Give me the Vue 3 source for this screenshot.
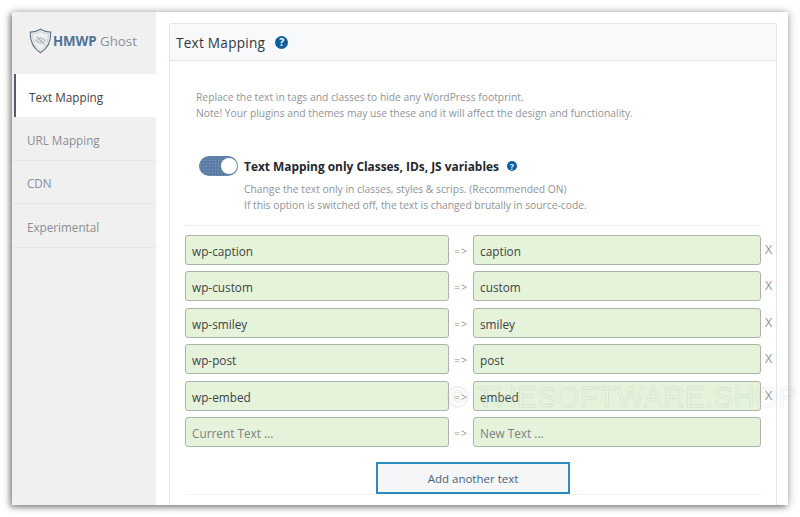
<script setup>
const nav = [
  { label: 'Text Mapping', active: true },
  { label: 'URL Mapping' },
  { label: 'CDN' },
  { label: 'Experimental' }
]
const rows = [
  ['wp-caption', 'caption'],
  ['wp-custom', 'custom'],
  ['wp-smiley', 'smiley'],
  ['wp-post', 'post'],
  ['wp-embed', 'embed']
]
</script>

<template>
  <div class="page">
    <div class="window">
      <aside class="sidebar">
        <div class="brand">
          <svg class="shield" width="23" height="26" viewBox="0 0 23 26" fill="none">
            <path d="M11.5 1.2C8 3.2 4.8 4 1.3 4.1c-.3 8.6 2 15.800 10.200 20.700C19.700 19.900 22 12.700 21.700 4.100 18.200 4 15 3.200 11.500 1.200Z" stroke="#5d7186" stroke-width="1.100"/>
            <path d="M11.500 3.400C9 4.800 6.500 5.500 3.600 5.800c0 6.800 2 12.700 7.900 16.500 5.900-3.800 7.900-9.700 7.900-16.500-2.900-.3-5.400-1-7.900-2.400Z" stroke="#c3c8cd" stroke-width=".8"/>
            <path d="M6 12.500c3.300-3.600 7.700-3.600 11 0-3.300 3.600-7.700 3.600-11 0Z" fill="#d6d8da" stroke="#aeb3b8" stroke-width=".7"/>
            <path d="M7.500 8l8 9" stroke="#a5abb1" stroke-width="1"/>
          </svg>
          <span class="brand-text"><b>HMWP</b> <span>Ghost</span></span>
        </div>
        <nav class="nav">
          <a v-for="item in nav" :key="item.label" class="nav-item" :class="{ active: item.active }">{{ item.label }}</a>
        </nav>
      </aside>

      <main class="content">
        <section class="panel">
          <header class="panel-head">
            <h1>Text Mapping</h1>
            <span class="help big">?</span>
          </header>
          <div class="panel-body">
            <div class="intro">
              <p>Replace the text in tags and classes to hide any WordPress footprint.</p>
              <p>Note! Your plugins and themes may use these and it will affect the design and functionality.</p>
            </div>

            <div class="option">
              <span class="toggle"><span class="knob"></span></span>
              <div class="option-text">
                <div class="option-title">
                  <strong>Text Mapping only Classes, IDs, JS variables</strong>
                  <span class="help small">?</span>
                </div>
                <p>Change the text only in classes, styles &amp; scrips. (Recommended ON)</p>
                <p>If this option is switched off, the text is changed brutally in source-code.</p>
              </div>
            </div>

            <div class="rows">
              <div v-for="r in rows" :key="r[0]" class="row">
                <input class="field left" :value="r[0]" readonly />
                <span class="arrow">=&gt;</span>
                <input class="field right" :value="r[1]" readonly />
                <span class="remove">X</span>
              </div>
              <div class="row">
                <input class="field left" placeholder="Current Text ..." />
                <span class="arrow">=&gt;</span>
                <input class="field right" placeholder="New Text ..." />
              </div>
            </div>

            <div class="actions">
              <button class="add" type="button">Add another text</button>
            </div>
          </div>
        </section>
      </main>
      <div class="watermark">© THESOFTWARE.SHOP</div>
    </div>
  </div>
</template>

<style>
html, body { margin: 0; background: #fff; overflow: hidden; }
</style>

<style scoped>
.page {
  width: 800px;
  height: 517px;
  box-sizing: border-box;
  padding: 12px;
  font-family: "Open Sans", "Noto Sans", sans-serif;
  overflow: hidden;
}
.window {
  position: relative;
  width: 776px;
  height: 493px;
  display: flex;
  background: #fff;
  box-shadow: -2px 2px 6px rgba(0, 0, 0, .45), 1px 0 9px rgba(0, 0, 0, .22);
}
.sidebar {
  width: 144px;
  flex: none;
  background: #f0f0f0;
}
.brand {
  height: 62px;
  box-sizing: border-box;
  padding: 16px 0 0 17px;
  display: flex;
  align-items: flex-start;
  gap: 1px;
}
.shield { flex: none; }
.brand-text {
  padding-top: 1px;
  font-size: 13.300px;
  line-height: 25px;
  color: #8c9196;
  white-space: nowrap;
}
.brand-text b { color: #4f7398; font-weight: 700; letter-spacing: -.1px; }
.nav { display: flex; flex-direction: column; }
.nav-item {
  height: 43.400px;
  box-sizing: border-box;
  padding: 3px 0 0 15px;
  display: flex;
  align-items: center;
  font-size: 11.700px;
  color: #8a8f94;
  border-bottom: 1px solid #e6e6e6;
}
.nav-item.active {
  margin-left: 2px;
  background: #fff;
  color: #3f4347;
  border-bottom: 0;
  border-left: 2px solid #4b5e78;
  padding-left: 13px;
}
.content {
  flex: 1;
  min-width: 0;
  padding: 11px 11px 0 13px;
  overflow: hidden;
}
.panel {
  height: 482px;
  box-sizing: border-box;
  border: 1px solid #e3e5e7;
  border-bottom: 0;
  border-radius: 2px 2px 0 0;
}
.panel-head {
  height: 37px;
  box-sizing: border-box;
  background: #f7f9fa;
  border-bottom: 1px solid #e3e5e7;
  padding-left: 6px;
  display: flex;
  align-items: center;
  gap: 10px;
}
h1 {
  margin: 1px 0 0;
  font-size: 13.600px;
  font-weight: 400;
  color: #32373c;
  letter-spacing: .25px;
}
.help {
  border-radius: 50%;
  background: #0f5f9c;
  color: #fff;
  font-weight: 700;
  display: inline-flex;
  align-items: center;
  justify-content: center;
}
.help.big { width: 13px; height: 13px; font-size: 10.500px; }
.help.small { width: 10px; height: 10px; font-size: 8px; margin-left: 8px; }
.panel-body { padding: 28px 15px 0 15px; }
.intro p {
  margin: 0;
  padding-left: 11px;
  font-size: 10.300px;
  line-height: 16px;
  color: #8f9498;
}
.option {
  margin-top: 36px;
  padding: 0 0 11px 14px;
  display: flex;
  gap: 6px;
  border-bottom: 1px solid #eeeeee;
}
.toggle {
  flex: none;
  width: 39px;
  height: 20px;
  margin-top: -1px;
  border-radius: 10px;
  background-color: #5c7ea6;
  background-image: radial-gradient(rgba(255, 255, 255, .22) .6px, transparent .8px);
  background-size: 3px 3px;
  position: relative;
}
.knob {
  position: absolute;
  right: 1px;
  top: 2px;
  width: 16px;
  height: 16px;
  border-radius: 50%;
  background: #fff;
}
.option-text { min-width: 0; }
.option-title {
  display: flex;
  align-items: center;
  height: 18px;
  margin-bottom: 6px;
}
.option-title strong {
  font-size: 11.900px;
  font-weight: 700;
  color: #23282d;
}
.option-text p {
  margin: 0;
  font-size: 10.300px;
  line-height: 16px;
  color: #8f9498;
}
.option-text p:last-child { margin-bottom: 1px; }
.rows {
  display: flex;
  flex-direction: column;
  gap: 6.400px;
  margin-top: 9px;
}
.row { display: flex; align-items: center; height: 30px; }
.field {
  flex: none;
  height: 30px;
  box-sizing: border-box;
  background: #e5f3db;
  border: 1px solid #aab5a8;
  border-radius: 3px;
  padding: 2px 6px 0;
  font: 11.800px "Open Sans", "Noto Sans", sans-serif;
  color: #3f4347;
  outline: none;
}
.field::placeholder { color: #7c8083; opacity: 1; }
.field.left { width: 264px; }
.field.right { width: 288px; }
.arrow {
  flex: none;
  width: 24px;
  padding-top: 2px;
  text-align: center;
  font-size: 10.500px;
  letter-spacing: 1px;
  color: #8f9498;
}
.remove {
  flex: none;
  margin-left: 4px;
  font-size: 12.500px;
  line-height: 30px;
  align-self: flex-start;
  color: #8f9498;
}
.actions {
  display: flex;
  justify-content: center;
  margin-top: 15px;
  width: 576px;
  border-bottom: 1px solid #f4f4f4;
}
.add {
  width: 194px;
  height: 32px;
  box-sizing: border-box;
  padding-top: 2px;
  border: 2px solid #2b8cc4;
  border-radius: 0;
  background: #f4f6f8;
  color: #4a6478;
  font: 11.500px "Open Sans", "Noto Sans", sans-serif;
}
.watermark {
  position: absolute;
  left: 435px;
  top: 367px;
  font-size: 29px;
  line-height: 36px;
  white-space: nowrap;
  color: rgba(255, 255, 255, .12);
  -webkit-text-stroke: .5px rgba(150, 160, 160, .35);
  letter-spacing: .6px;
  font-family: "Liberation Sans", sans-serif;
  pointer-events: none;
}
</style>
